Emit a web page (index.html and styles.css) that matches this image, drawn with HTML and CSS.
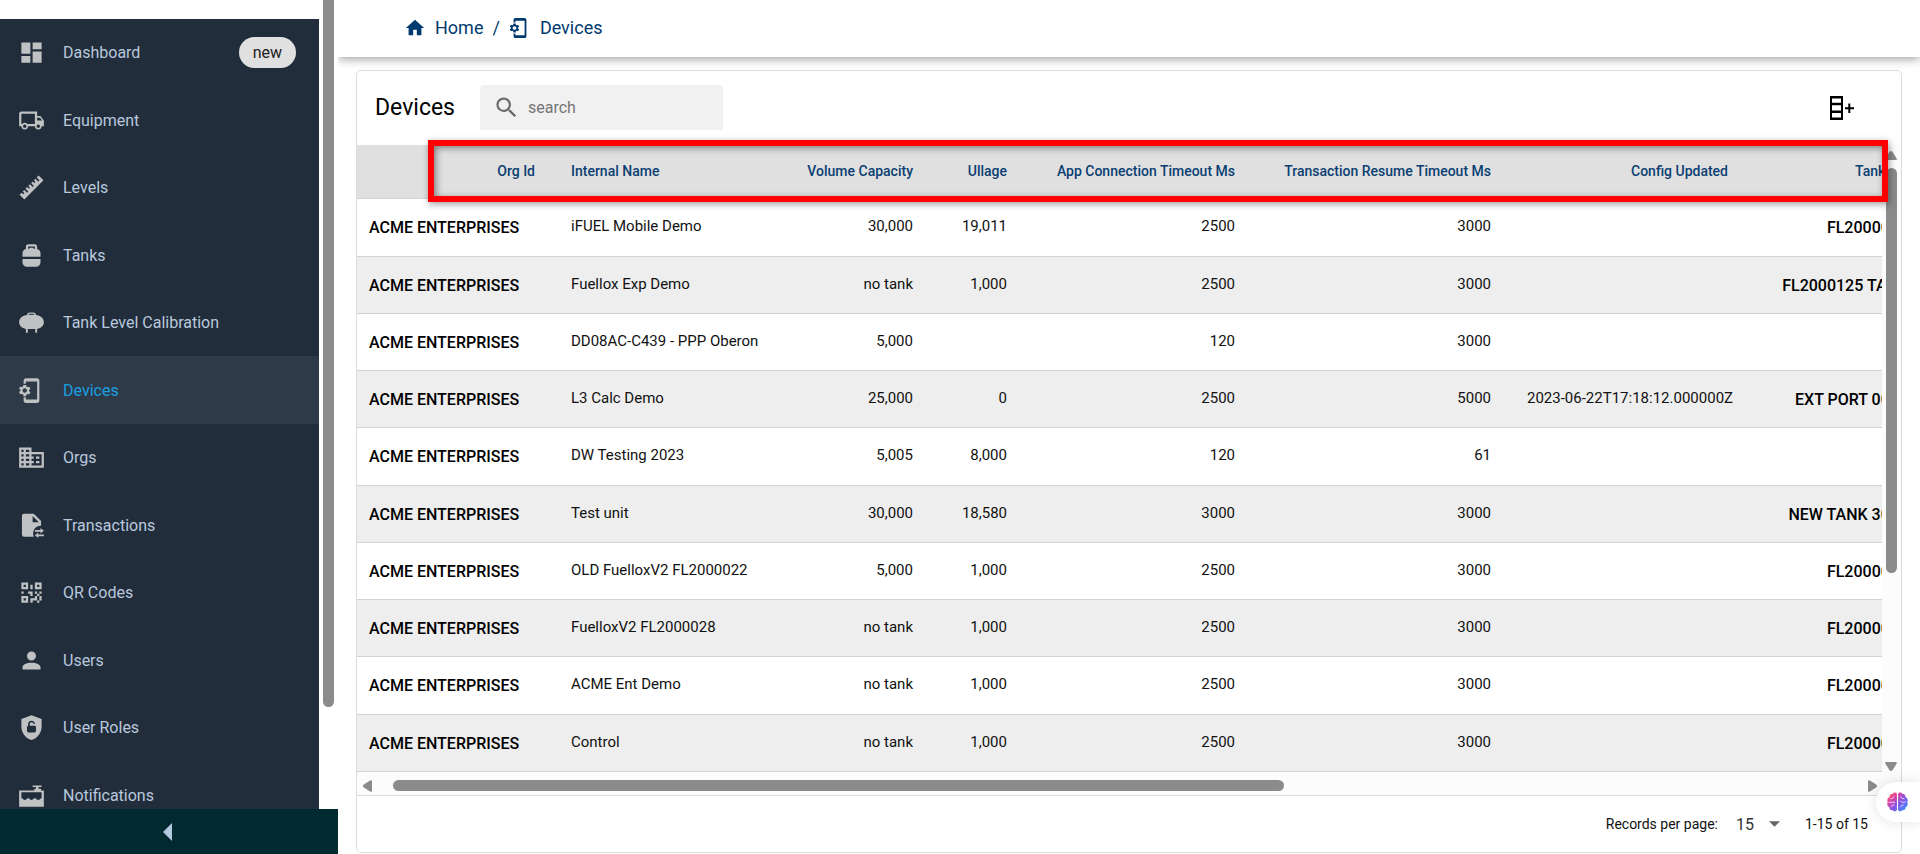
FILE: index.html
```html
<!DOCTYPE html>
<html lang="en">
<head>
<meta charset="utf-8">
<title>Devices</title>
<link rel="stylesheet" href="styles.css">
</head>
<body>
<svg class="defs" aria-hidden="true">
  <symbol id="device" viewBox="2 0 24 24"><path fill-rule="evenodd" d="M11.8 12.5v-1l1.1-.8c.1-.1.1-.2.1-.3l-1-1.7c-.1-.1-.2-.2-.3-.1l-1.3.4c-.3-.2-.6-.4-.9-.5l-.2-1.3c0-.1-.1-.2-.3-.2H7c-.1 0-.2.1-.3.2l-.2 1.3c-.3.1-.6.3-.9.5l-1.3-.5c-.1 0-.2 0-.3.1l-1 1.7c-.1.1 0 .2.1.3l1.1.8v1l-1.1.8c-.1.2-.1.3-.1.4l1 1.7c.1.1.2.2.3.1l1.4-.4c.3.2.6.4.9.5l.2 1.3c-.1.1.1.2.2.2h2c.1 0 .2-.1.3-.2l.2-1.3c.3-.1.6-.3.9-.5l1.3.5c.1 0 .2 0 .3-.1l1-1.7c.1-.1 0-.2-.1-.3l-1.1-.9zM8 14c-1.1 0-2-.9-2-2s.9-2 2-2 2 .9 2 2-.9 2-2 2zM19 1H9c-1.1 0-2 .9-2 2v3h2V4h10v16H9v-2H7v3c0 1.1.9 2 2 2h10c1.1 0 2-.9 2-2V3c0-1.1-.9-2-2-2z"/></symbol>
</svg>
<aside class="sidebar">
  <div class="sidebar-body">
    <nav class="nav">
      <ul>
        <li><a href="#"><svg class="icon" viewBox="0 0 24 24"><path d="M3 13h8V3H3v10zm0 8h8v-6H3v6zm10 0h8V11h-8v10zm0-18v6h8V3h-8z"/></svg><span>Dashboard</span><span class="badge">new</span></a></li>
        <li><a href="#"><svg class="icon" viewBox="0 0 24 24"><path d="M18 18.5c.83 0 1.5-.67 1.5-1.5s-.67-1.5-1.5-1.5-1.5.67-1.5 1.5.67 1.5 1.5 1.5m1.5-9H17V12h4.46L19.5 9.5M6 18.5c.83 0 1.5-.67 1.5-1.5s-.67-1.5-1.5-1.5-1.5.67-1.5 1.5.67 1.5 1.5 1.5M20 8l3 4v5h-2c0 1.66-1.34 3-3 3s-3-1.34-3-3H9c0 1.66-1.34 3-3 3s-3-1.34-3-3H1V6c0-1.11.89-2 2-2h14v4h3M3 6v9h.76c.55-.61 1.35-1 2.24-1s1.69.39 2.24 1H15V6H3z"/></svg><span>Equipment</span></a></li>
        <li><a href="#"><svg class="icon" viewBox="0 0 24 24"><path d="M1.39 18.36 3.16 16.6 4.58 18l1.06-1.05-1.42-1.41 1.42-1.42 2.47 2.48 1.06-1.06-2.47-2.48 1.41-1.41 1.42 1.41L10.59 12 9.17 10.59l1.42-1.42 2.47 2.48 1.06-1.06-2.47-2.48 1.41-1.41 1.41 1.41 1.07-1.06-1.42-1.41 1.42-1.42L18 6.7l1.07-1.06-2.47-2.48 1.76-1.77 4.25 4.25L5.64 22.61z"/></svg><span>Levels</span></a></li>
        <li><a href="#"><svg class="icon" viewBox="0 0 24 24"><path d="M4 15v3c0 2.2 1.8 4 4 4h8c2.2 0 4-1.8 4-4v-3H4zM20 13v-3c0-1.86-1.28-3.41-3-3.86V4c0-1.1-.9-2-2-2H9C7.9 2 7 2.900 7 4v2.140C5.280 6.590 4 8.140 4 10v3h16zM9 4h6v2h-1c0-.55-.45-1-1-1h-2c-.55 0-1 .45-1 1H9V4z"/></svg><span>Tanks</span></a></li>
        <li><a href="#"><svg class="icon" viewBox="0 0 24 24"><path d="M8 5.300C8 4 9 3 10.300 3h3.400C15 3 16 4 16 5.300c4 .3 7 3 7 6.400 0 3-2.400 5.300-6 6V21h-1.700v-3.200H8.700V21H7v-3.300c-3.600-.7-6-3-6-6 0-3.400 3-6.100 7-6.400zm1.500-.1h5c0-.5-.4-.9-.9-.9h-3.200c-.5 0-.9.4-.9.9z"/></svg><span>Tank Level Calibration</span></a></li>
        <li class="active"><a href="#" aria-current="page"><svg class="icon"><use href="#device"/></svg><span>Devices</span></a></li>
        <li><a href="#"><svg class="icon" viewBox="0 0 24 24"><path d="M12 7V3H1v18h22V7H12zM5 19H3v-2h2v2zm0-4H3v-2h2v2zm0-4H3V9h2v2zm0-4H3V5h2v2zm5 12H7v-2h3v2zm0-4H7v-2h3v2zm0-4H7V9h3v2zm0-4H7V5h3v2zm11 12h-9v-2h2v-2h-2v-2h2v-2h-2V9h9v10zm-2-8h-3v2h3v-2zm0 4h-3v2h3v-2z"/></svg><span>Orgs</span></a></li>
        <li><a href="#"><svg class="icon" viewBox="0 0 24 24"><path d="M5.500 1.500H14l6.500 6.500v4.300c-4-.1-7 3-7 6.700 0 1 .2 2 .6 3H5.500a2 2 0 0 1-2-2V3.500a2 2 0 0 1 2-2zM13 3.500V9h5.500L13 3.500z"/><path d="M20 14.300l3 2.400-3 2.400v-1.600h-5v-1.600h5zM18 18.300v1.600h5v1.600h-5v1.600l-3-2.400z"/></svg><span>Transactions</span></a></li>
        <li><a href="#"><svg class="icon" viewBox="0 0 24 24"><path d="M3 11h2v2H3v-2m8-6h2v4h-2V5m-2 6h4v4h-2v-2H9v-2m6 0h2v2h2v-2h2v2h-2v2h2v4h-2v2h-2v-2h-4v2h-2v-4h4v-2h2v-2h-2v-2m4 8v-4h-2v4h2M15 3h6v6h-6V3m2 2v2h2V5h-2M3 3h6v6H3V3m2 2v2h2V5H5M3 15h6v6H3v-6m2 2v2h2v-2H5z"/></svg><span>QR Codes</span></a></li>
        <li><a href="#"><svg class="icon" viewBox="0 0 24 24"><path d="M12 4a4 4 0 1 1 0 8 4 4 0 0 1 0-8m0 10c4.420 0 8 1.790 8 4v2H4v-2c0-2.210 3.580-4 8-4z"/></svg><span>Users</span></a></li>
        <li><a href="#"><svg class="icon" viewBox="0 0 24 24"><path fill-rule="evenodd" d="M12 1 3 4.500V11c0 5.550 3.840 10.740 9 12 5.160-1.260 9-6.450 9-12V4.500L12 1zM9 10.500V9c0-1.700 1.300-3 3-3s3 1.200 3 2.700h-1.500c0-.8-.6-1.300-1.500-1.300s-1.500.7-1.500 1.600v1.500h4.200c.7 0 1.300.6 1.300 1.300v3.400c0 .7-.6 1.300-1.300 1.300H9.300c-.7 0-1.300-.6-1.300-1.300v-3.400c0-.7.4-1.200 1-1.300z"/></svg><span>User Roles</span></a></li>
        <li><a href="#"><svg class="icon" viewBox="0 0 24 24"><path fill-rule="evenodd" d="M13 3h8v1.500h-2.700v1.500h2.200v1.500H23V22H1V7.500h13.500V6H16V4.500h-3zM3 9v5.500c1.500 0 1.500 1.500 3 1.500s1.500-1.500 3-1.500 1.500 1.500 3 1.500 1.500-1.500 3-1.500 1.500 1.500 3 1.500 1.500-1.500 3-1.500V9z"/></svg><span>Notifications</span></a></li>
      </ul>
    </nav>
    <div class="side-scroll"><div class="side-thumb"></div></div>
  </div>
  <button class="collapse" aria-label="Collapse menu"><svg viewBox="0 0 9 18"><path d="M9 0v18L0 9z"/></svg></button>
</aside>
<main class="main">
  <header class="topbar">
    <nav class="crumbs">
      <a href="#"><svg class="crumb-icon home" viewBox="0 0 24 24"><path d="M10 20v-6h4v6h5v-8h3L12 3 2 12h3v8z"/></svg>Home</a>
      <span class="slash">/</span>
      <a href="#"><svg class="crumb-icon"><use href="#device"/></svg>Devices</a>
    </nav>
  </header>
  <section class="card">
    <div class="toolbar">
      <h1>Devices</h1>
      <label class="search">
        <svg viewBox="0 0 24 24"><path d="M15.500 14h-.79l-.28-.27A6.470 6.470 0 0 0 16 9.500 6.500 6.500 0 1 0 9.500 16c1.610 0 3.090-.59 4.230-1.570l.27.28v.79l5 4.990L20.490 19l-4.990-5zm-6 0C7.010 14 5 11.990 5 9.500S7.010 5 9.500 5 14 7.010 14 9.500 11.990 14 9.500 14z"/></svg>
        <input type="text" placeholder="search" aria-label="search">
      </label>
      <button class="add-col" aria-label="Columns"><svg viewBox="0 0 24 24"><path fill-rule="evenodd" d="M0 0h13v24H0zM2 2.500v4.300h9V2.500zM2 9.300v5.200h9V9.300zM2 17v4.500h9V17zM18.300 7.500h2v3.700H24v2h-3.700V17h-2v-3.800H15v-2h3.300z"/></svg></button>
    </div>
    <div class="grid">
      <div class="scroller">
        <table>
          <colgroup><col class="c-org"><col class="c-name"><col class="c-vol"><col class="c-ull"><col class="c-app"><col class="c-res"><col class="c-conf"><col class="c-tank"></colgroup>
          <thead><tr><th>Org Id</th><th class="left">Internal Name</th><th>Volume Capacity</th><th>Ullage</th><th>App Connection Timeout Ms</th><th>Transaction Resume Timeout Ms</th><th>Config Updated</th><th>Tank Name</th></tr></thead>
          <tbody>
            <tr><td class="strong">ACME ENTERPRISES</td><td class="left">iFUEL Mobile Demo</td><td>30,000</td><td>19,011</td><td>2500</td><td>3000</td><td></td><td class="strong">FL2000000</td></tr>
            <tr><td class="strong">ACME ENTERPRISES</td><td class="left">Fuellox Exp Demo</td><td>no tank</td><td>1,000</td><td>2500</td><td>3000</td><td></td><td class="strong">FL2000125 TANK</td></tr>
            <tr><td class="strong">ACME ENTERPRISES</td><td class="left">DD08AC-C439 - PPP Oberon</td><td>5,000</td><td></td><td>120</td><td>3000</td><td></td><td></td></tr>
            <tr><td class="strong">ACME ENTERPRISES</td><td class="left">L3 Calc Demo</td><td>25,000</td><td>0</td><td>2500</td><td>5000</td><td>2023-06-22T17:18:12.000000Z</td><td class="strong">EXT PORT 0000</td></tr>
            <tr><td class="strong">ACME ENTERPRISES</td><td class="left">DW Testing 2023</td><td>5,005</td><td>8,000</td><td>120</td><td>61</td><td></td><td></td></tr>
            <tr><td class="strong">ACME ENTERPRISES</td><td class="left">Test unit</td><td>30,000</td><td>18,580</td><td>3000</td><td>3000</td><td></td><td class="strong">NEW TANK 3000</td></tr>
            <tr><td class="strong">ACME ENTERPRISES</td><td class="left">OLD FuelloxV2 FL2000022</td><td>5,000</td><td>1,000</td><td>2500</td><td>3000</td><td></td><td class="strong">FL2000000</td></tr>
            <tr><td class="strong">ACME ENTERPRISES</td><td class="left">FuelloxV2 FL2000028</td><td>no tank</td><td>1,000</td><td>2500</td><td>3000</td><td></td><td class="strong">FL2000000</td></tr>
            <tr><td class="strong">ACME ENTERPRISES</td><td class="left">ACME Ent Demo</td><td>no tank</td><td>1,000</td><td>2500</td><td>3000</td><td></td><td class="strong">FL2000000</td></tr>
            <tr><td class="strong">ACME ENTERPRISES</td><td class="left">Control</td><td>no tank</td><td>1,000</td><td>2500</td><td>3000</td><td></td><td class="strong">FL2000000</td></tr>
          </tbody>
        </table>
      </div>
      <div class="vbar">
        <svg class="arrow-v" viewBox="0 0 12 9"><path d="M6 0q1 0 1.500.8L11.700 7.500q.5 1.500-1 1.500H1.300q-1.500 0-1-1.500L4.500.8Q5 0 6 0z"/></svg>
        <div class="vtrack"><div class="vthumb"></div></div>
        <svg class="arrow-v" viewBox="0 0 12 9"><path d="M6 9q1 0 1.500-.8L11.700 1.500Q12.200 0 10.700 0H1.300Q-.2 0 .3 1.500l4.200 6.700Q5 9 6 9z"/></svg>
      </div>
      <div class="hbar">
        <svg class="arrow-h" viewBox="0 0 9 12"><path d="M0 6q0-1 .8-1.500L7.500.3Q9-.2 9 1.300v9.400q0 1.500-1.500 1L.8 7.500Q0 7 0 6z"/></svg>
        <div class="htrack"><div class="hthumb"></div></div>
        <svg class="arrow-h" viewBox="0 0 9 12"><path d="M9 6q0-1-.8-1.500L1.500.3Q0-.2 0 1.300v9.400q0 1.500 1.500 1l6.700-4.200Q9 7 9 6z"/></svg>
      </div>
      <div class="highlight"></div>
    </div>
    <footer class="pager">
      <label for="per-page">Records per page:</label>
      <span class="select"><select id="per-page"><option>15</option></select><svg viewBox="0 0 10 5"><path d="M0 0h10L5 5z"/></svg></span>
      <span>1-15 of 15</span>
    </footer>
  </section>
</main>
<button class="assistant" aria-label="Assistant">
  <svg viewBox="0 0 22 20">
    <defs><linearGradient id="brain" x1="0" y1="0" x2="1" y2="1"><stop offset="0" stop-color="#ff7a4d"/><stop offset=".28" stop-color="#e0409f"/><stop offset=".58" stop-color="#8155e8"/><stop offset="1" stop-color="#28a0ff"/></linearGradient></defs>
    <path fill="url(#brain)" d="M10.400 1.500v17c-.6 1.500-3.500 2-4.700 0-2 .2-3.300-1-3.200-3C.5 14.500-.3 12 .8 10.200-.3 8 .8 5.300 2.700 4.800 2.500 2.500 4.300 1.200 6 1.500 7-.3 9.800-.3 10.400 1.500zM11.600 1.500v17c.6 1.500 3.500 2 4.700 0 2 .2 3.300-1 3.200-3 2-1 2.800-3.500 1.700-5.300 1.100-2.200 0-4.900-1.900-5.400.2-2.300-1.600-3.600-3.300-3.300-1-1.800-3.800-1.800-4.400 0z"/>
    <path fill="none" stroke="#f3d9ff" stroke-width="1" stroke-linecap="round" d="M4 6.500c1.500 0 3-.5 3.300-2M2 10.300h6M4.500 15c.3-1.500 1.500-2 3-2M14.500 4.500c.3 1.500 1.500 2 3.300 2M14 9c.8 1.500 3.500 1.800 5 1M14.500 15c0-1.200 1-2 2.500-1.800"/>
  </svg>
</button>
</body>
</html>
```
FILE: styles.css
```css
* { box-sizing: border-box; }
body {
  margin: 0;
  height: 100vh;
  display: flex;
  overflow: hidden;
  font-family: Roboto, "Liberation Sans", sans-serif;
  font-size: 15px;
  color: #111;
  background: #fff;
}
a { color: inherit; text-decoration: none; }
button { border: 0; padding: 0; background: none; font: inherit; cursor: pointer; }
svg { display: block; fill: currentColor; flex: none; }
.defs { position: absolute; width: 0; height: 0; }

/* Sidebar */
.sidebar { width: 338px; flex: none; display: flex; flex-direction: column; }
.sidebar-body { flex: 1; min-height: 0; display: flex; }
.nav { width: 319px; margin-top: 19px; overflow: hidden; background: #212d3b; color: #b9c8dd; font-size: 16px; }
.nav ul { margin: 0; padding: 0; list-style: none; }
.nav li { height: 67px; }
.nav li:nth-child(even) { height: 68px; }
.nav a { height: 100%; display: flex; align-items: center; gap: 18px; padding: 0 23px 0 18px; }
.nav .active { background: #2e3a48; color: #1a9fe0; }
.icon { width: 27px; height: 27px; color: #bfc1c2; }
.badge { margin-left: auto; padding: 0 14px; border-radius: 16px; background: #e0e0e0; color: #222; line-height: 31px; }
.side-scroll { flex: 1; padding: 0 4px; }
.side-thumb { width: 11px; height: 707px; border-radius: 0 0 6px 6px; background: #8b8b8b; }
.collapse { height: 45px; display: flex; align-items: center; justify-content: center; padding-right: 3px; background: #012a30; color: #b4c8e0; }
.collapse svg { width: 9px; height: 18px; }

/* Main column */
.main { flex: 1; min-width: 0; display: flex; flex-direction: column; }
.topbar { height: 57px; flex: none; padding: 0 66px; display: flex; align-items: center; box-shadow: 0 1px 10px rgba(0, 0, 0, .45); clip-path: inset(0 0 -16px 0); background: #fff; }
.crumbs { display: flex; align-items: center; gap: 9px; padding-bottom: 2px; font-size: 18px; color: #003a6e; }
.crumbs a { display: flex; align-items: center; gap: 9px; }
.crumb-icon { width: 22px; height: 22px; }

.card { flex: 1; min-height: 0; display: flex; flex-direction: column; margin: 13px 18px 1px; border: 1px solid #dcdcdc; border-radius: 5px; }
.toolbar { height: 74px; flex: none; display: flex; align-items: center; gap: 25px; padding: 0 47px 1px 18px; }
h1 { margin: 0; font-size: 23px; font-weight: 400; color: #000; }
.search { width: 243px; height: 45px; display: flex; align-items: center; gap: 8px; padding-left: 13px; border-radius: 4px 4px 0 0; background: #f1f1f1; color: #6b6b6b; }
.search svg { width: 27px; height: 27px; }
.search input { width: 180px; border: 0; padding: 0; outline: 0; background: none; font: 16px Roboto, sans-serif; color: inherit; }
.search input::placeholder { color: #757575; opacity: 1; }
.add-col { margin-left: auto; color: #000; }
.add-col svg { width: 24px; height: 24px; }

/* Table with its scroll bars */
.grid { flex: 1; min-height: 0; position: relative; display: grid; grid-template: minmax(0, 1fr) 23px / minmax(0, 1fr) 19px; }
.scroller { overflow: hidden; }
table { width: 1587px; table-layout: fixed; border-collapse: separate; border-spacing: 0; }
.c-org { width: 196px; }
.c-name { width: 230px; }
.c-vol { width: 148px; }
.c-ull { width: 94px; }
.c-app { width: 228px; }
.c-res { width: 256px; }
.c-conf { width: 237px; }
.c-tank { width: 198px; }
th, td { padding: 0 18px; text-align: right; white-space: nowrap; border-bottom: 1px solid #d2d2d2; }
th { height: 54px; padding-bottom: 2px; background: #e0e0e0; font-size: 14px; font-weight: 500; color: #0b3f72; }
td { height: 57px; padding-bottom: 3px; }
tbody tr:nth-child(4n+1) td { height: 58px; }
tbody tr:nth-child(even) { background: #eee; }
.left { text-align: left; }
.strong { padding: 0 36px 0 12px; font-size: 16px; font-weight: 500; color: #000; }
.vbar { display: flex; flex-direction: column; align-items: center; gap: 8px; padding: 6px 4px 1px 3px; background: #fcfcfc; color: #8b8b8b; }
.arrow-v { width: 12px; height: 9px; }
.vtrack { flex: 1; width: 11px; }
.vthumb { height: 405px; border-radius: 6px; background: #8b8b8b; }
.hbar { grid-column: 1 / -1; display: flex; align-items: center; gap: 21px; padding: 4px 24px 0 6px; background: #fcfcfc; color: #8b8b8b; }
.arrow-h { width: 9px; height: 12px; }
.htrack { flex: 1; height: 11px; }
.hthumb { width: 61.3%; height: 11px; border-radius: 6px; background: #8b8b8b; }
.highlight { position: absolute; top: -5px; left: 71px; right: 13px; height: 62px; border: 6px solid #f00; box-shadow: 1px 2px 7px rgba(0, 0, 0, .4), inset 2px 2px 7px rgba(0, 0, 0, .45); }

.pager { height: 57px; flex: none; display: flex; align-items: center; justify-content: flex-end; padding-right: 33px; border-top: 1px solid #dcdcdc; font-size: 14px; }
.select { display: flex; align-items: center; gap: 15px; margin: 0 25px 0 18px; color: #666; }
.select select { appearance: none; border: 0; padding: 0; background: none; font: 16px Roboto, sans-serif; color: #333; }
.select svg { width: 11px; height: 6px; }

.assistant { position: absolute; right: 0; bottom: 32px; padding: 0 12px 0 11px; height: 40px; border-radius: 20px 0 0 20px; background: #fff; box-shadow: 0 0 14px rgba(0, 0, 0, .12); }
.assistant svg { width: 21px; height: 20px; }
```
